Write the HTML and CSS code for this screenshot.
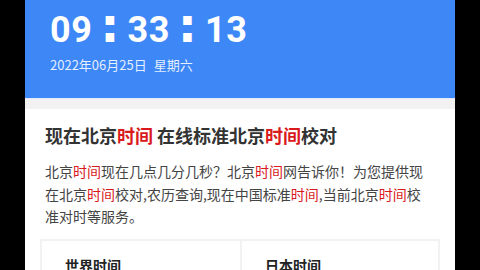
FILE: index.html
```html
<!DOCTYPE html>
<html lang="zh-CN">
<head>
<meta charset="utf-8">
<title>北京时间</title>
<link rel="stylesheet" href="styles.css">
</head>
<body>
<div class="screen">
  <header class="clock">
    <div class="time">09<span class="colon">:</span>33<span class="colon">:</span>13</div>
    <div class="date">2022年06月25日<span class="week">星期六</span></div>
  </header>
  <div class="strip"></div>
  <main class="content">
    <h1 class="title">现在北京<em>时间</em> 在线标准北京<em>时间</em>校对</h1>
    <p class="desc">北京<em>时间</em>现在几点几分几秒？北京<em>时间</em>网告诉你！为您提供现在北京<em>时间</em>校对,农历查询,现在中国标准<em>时间</em>,当前北京<em>时间</em>校准对时等服务。</p>
    <div class="zones">
      <div class="zone"><h2 class="zone-name">世界时间</h2></div>
      <div class="zone"><h2 class="zone-name">日本时间</h2></div>
    </div>
  </main>
</div>
</body>
</html>
```
FILE: styles.css
```css
html, body {
  margin: 0;
  padding: 0;
  background: #000;
}
body {
  font-family: "Noto Sans CJK SC", "Noto Sans", sans-serif;
}
.screen {
  width: 430px;
  height: 270px;
  margin: 0 auto;
  background: #fff;
  overflow: hidden;
}
.clock {
  background: #3e87f7;
  height: 98px;
  box-sizing: border-box;
  padding: 9px 0 0 25px;
  color: #fff;
}
.time {
  font-family: Roboto, "Noto Sans CJK SC", sans-serif;
  font-weight: 700;
  font-size: 36px;
  line-height: 42px;
  height: 42px;
  letter-spacing: 0.5px;
}
.colon {
  font-family: "DejaVu Sans", sans-serif;
  font-weight: 700;
  font-size: 48px;
  line-height: 30px;
  letter-spacing: 0;
  padding: 0 8px;
}
.date {
  font-size: 13px;
  line-height: 18px;
  margin-top: 5px;
  color: rgba(255,255,255,0.88);
}
.week {
  margin-left: 7px;
}
.strip {
  height: 11px;
  background: #f2f2f2;
  border-top: 1px solid #dfe9fb;
  box-sizing: border-box;
}
.content {
  padding: 14px 20px 0;
}
em {
  font-style: normal;
  color: #d9191c;
}
.title {
  margin: 0;
  font-size: 18px;
  line-height: 24px;
  font-weight: 700;
  color: #333;
}
.desc {
  margin: 13px 0 0;
  width: 386px;
  font-size: 14px;
  line-height: 22.5px;
  color: #444;
}
.zones {
  margin: 11px -5px 0;
  display: grid;
  grid-template-columns: 1fr 1fr;
  border: 2px solid #f2f2f2;
  border-bottom: none;
  height: 60px;
}
.zone + .zone {
  border-left: 2px solid #f2f2f2;
}
.zone {
  padding: 14px 0 0 23px;
}
.zone-name {
  margin: 0;
  font-size: 14px;
  line-height: 20px;
  font-weight: 700;
  color: #222;
}
```
